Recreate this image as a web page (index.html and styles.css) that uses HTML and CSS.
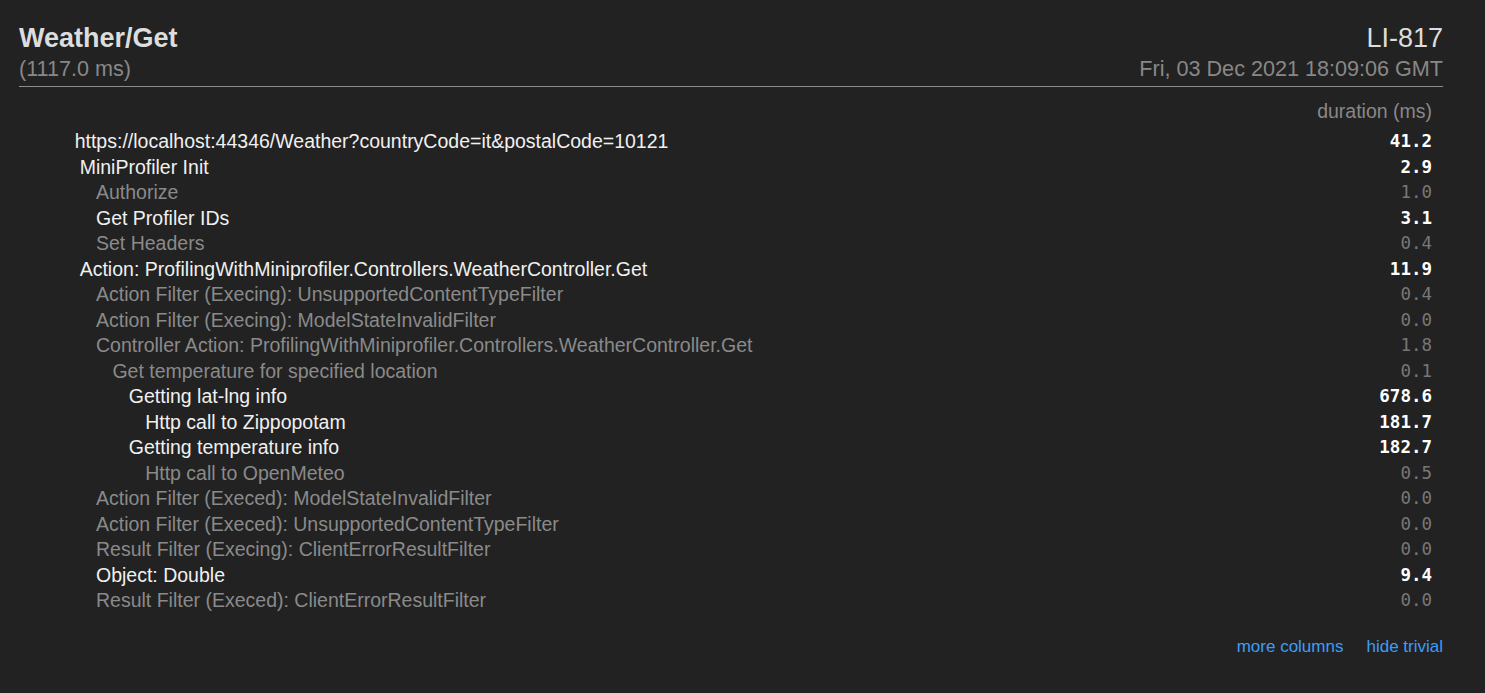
FILE: index.html
```html
<!DOCTYPE html>
<html>
<head>
<meta charset="utf-8">
<link rel="stylesheet" href="styles.css">
</head>
<body>
<div class="profiler">
  <header class="head">
    <div class="head-left">
      <div class="title">Weather/Get</div>
      <div class="sub">(1117.0 ms)</div>
    </div>
    <div class="head-right">
      <div class="machine">LI-817</div>
      <div class="sub">Fri, 03 Dec 2021 18:09:06 GMT</div>
    </div>
  </header>
  <div class="timings">
    <div class="th-name"></div><div class="th-dur">duration (ms)</div>

    <div class="name d0">https://localhost:44346/Weather?countryCode=it&amp;postalCode=10121</div><div class="dur">41.2</div>
    <div class="name d1">MiniProfiler Init</div><div class="dur">2.9</div>
    <div class="name d2 trivial">Authorize</div><div class="dur trivial">1.0</div>
    <div class="name d2">Get Profiler IDs</div><div class="dur">3.1</div>
    <div class="name d2 trivial">Set Headers</div><div class="dur trivial">0.4</div>
    <div class="name d1">Action: ProfilingWithMiniprofiler.Controllers.WeatherController.Get</div><div class="dur">11.9</div>
    <div class="name d2 trivial">Action Filter (Execing): UnsupportedContentTypeFilter</div><div class="dur trivial">0.4</div>
    <div class="name d2 trivial">Action Filter (Execing): ModelStateInvalidFilter</div><div class="dur trivial">0.0</div>
    <div class="name d2 trivial">Controller Action: ProfilingWithMiniprofiler.Controllers.WeatherController.Get</div><div class="dur trivial">1.8</div>
    <div class="name d3 trivial">Get temperature for specified location</div><div class="dur trivial">0.1</div>
    <div class="name d4">Getting lat-lng info</div><div class="dur">678.6</div>
    <div class="name d5">Http call to Zippopotam</div><div class="dur">181.7</div>
    <div class="name d4">Getting temperature info</div><div class="dur">182.7</div>
    <div class="name d5 trivial">Http call to OpenMeteo</div><div class="dur trivial">0.5</div>
    <div class="name d2 trivial">Action Filter (Execed): ModelStateInvalidFilter</div><div class="dur trivial">0.0</div>
    <div class="name d2 trivial">Action Filter (Execed): UnsupportedContentTypeFilter</div><div class="dur trivial">0.0</div>
    <div class="name d2 trivial">Result Filter (Execing): ClientErrorResultFilter</div><div class="dur trivial">0.0</div>
    <div class="name d2">Object: Double</div><div class="dur">9.4</div>
    <div class="name d2 trivial">Result Filter (Execed): ClientErrorResultFilter</div><div class="dur trivial">0.0</div>
  </div>
  <div class="links">
    <a class="link">more columns</a>
    <a class="link">hide trivial</a>
  </div>
</div>
</body>
</html>
```

FILE: styles.css
```css
html, body {
  margin: 0;
  padding: 0;
  background: #222222;
  height: 100%;
}
body {
  font-family: "Liberation Sans", Arial, sans-serif;
  color: #e8e8e8;
}
.profiler {
  padding: 23px 42px 0 19px;
}
.head {
  display: flex;
  justify-content: space-between;
  border-bottom: 1px solid #8c8c8c;
  padding-bottom: 5px;
}
.head-right {
  text-align: right;
}
.title {
  font-size: 27px;
  font-weight: bold;
  line-height: 31px;
  color: #dddddd;
}
.machine {
  font-size: 27px;
  line-height: 31px;
  color: #dddddd;
}
.sub {
  font-size: 21.6px;
  line-height: 24px;
  margin-top: 3px;
  color: #888888;
}
.timings {
  display: grid;
  grid-template-columns: 1fr auto;
  margin-top: 12px;
  font-size: 19.5px;
  line-height: 25.5px;
}
.th-dur {
  color: #888888;
  text-align: right;
  padding-right: 11px;
  margin-bottom: 4.5px;
}
.th-name {
  margin-bottom: 4.5px;
}
.name {
  color: #f0f0f0;
  white-space: nowrap;
}
.dur {
  font-family: "DejaVu Sans Mono", "Liberation Mono", monospace;
  font-size: 17.5px;
  font-weight: bold;
  text-align: right;
  padding-right: 11px;
  color: #ffffff;
}
.name.trivial {
  color: #8a8a8a;
}
.dur.trivial {
  color: #777777;
  font-weight: normal;
}
.d0 { padding-left: 55.7px; }
.d1 { padding-left: 60.7px; }
.d2 { padding-left: 77px; }
.d3 { padding-left: 93.4px; }
.d4 { padding-left: 109.8px; }
.d5 { padding-left: 126.2px; }
.links {
  display: flex;
  justify-content: flex-end;
  gap: 23px;
  margin-top: 23px;
  font-size: 17px;
  line-height: 20px;
}
.link {
  color: #3d9df5;
  cursor: pointer;
}
```
